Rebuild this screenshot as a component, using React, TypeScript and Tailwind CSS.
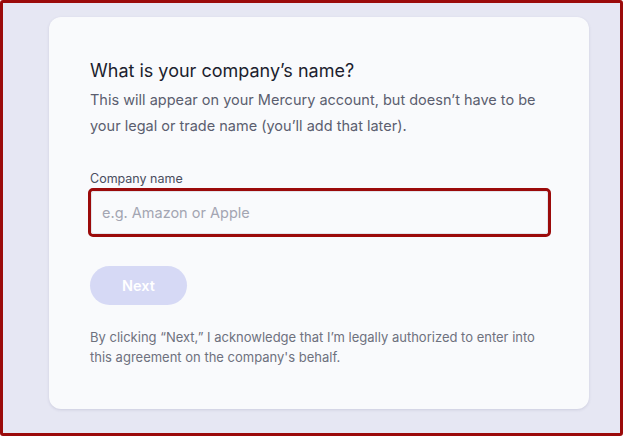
import React from 'react';

export default function App() {
  return (
    <div
      className="h-[436px] w-[623px] overflow-hidden rounded-[3px] border-[3px] border-[#9b0a0a] bg-[#e6e7f3] pl-[46px] pt-[14px]"
      style={{ fontFamily: 'Inter, "Noto Sans", sans-serif' }}
    >
      <div className="h-[392px] w-[540px] rounded-[12px] bg-[#f9fafc] pl-[41px] pr-[38px] pt-[41px] shadow-[0_1px_3px_rgba(60,60,110,0.15)]">
        <h1 className="text-[18px] leading-[26px] text-[#1c1e2e]">What is your company’s name?</h1>
        <p className="mt-[3px] text-[14.5px] leading-[26px] text-[#5b5e6f]">
          This will appear on your Mercury account, but doesn’t have to be your legal or trade name (you’ll add that later).
        </p>

        <div className="mt-[32px]">
          <label className="block text-[12.5px] leading-[16px] text-[#4a4d5e]">Company name</label>
          <div className="ml-[-2px] mt-[1px] w-[463px] rounded-[5px] border-[3px] border-[#9b0a0a]">
            <input
              className="block h-[43px] w-full rounded-[3px] border border-[#e3e4ea] bg-[#f9fafc] px-[10px] text-[14.5px] text-[#1c1e2e] outline-none placeholder:text-[#a3a5b2]"
              placeholder="e.g. Amazon or Apple"
            />
          </div>
        </div>

        <button className="mt-[29px] h-[39px] w-[97px] rounded-full bg-[#d6d9f5] text-[14.5px] font-semibold text-white">
          Next
        </button>

        <p className="mt-[22px] max-w-[445px] text-[13px] leading-[20px] text-[#6e717e]">
          By clicking “Next,” I acknowledge that I’m legally authorized to enter into this agreement on the company's behalf.
        </p>
      </div>
    </div>
  );
}
